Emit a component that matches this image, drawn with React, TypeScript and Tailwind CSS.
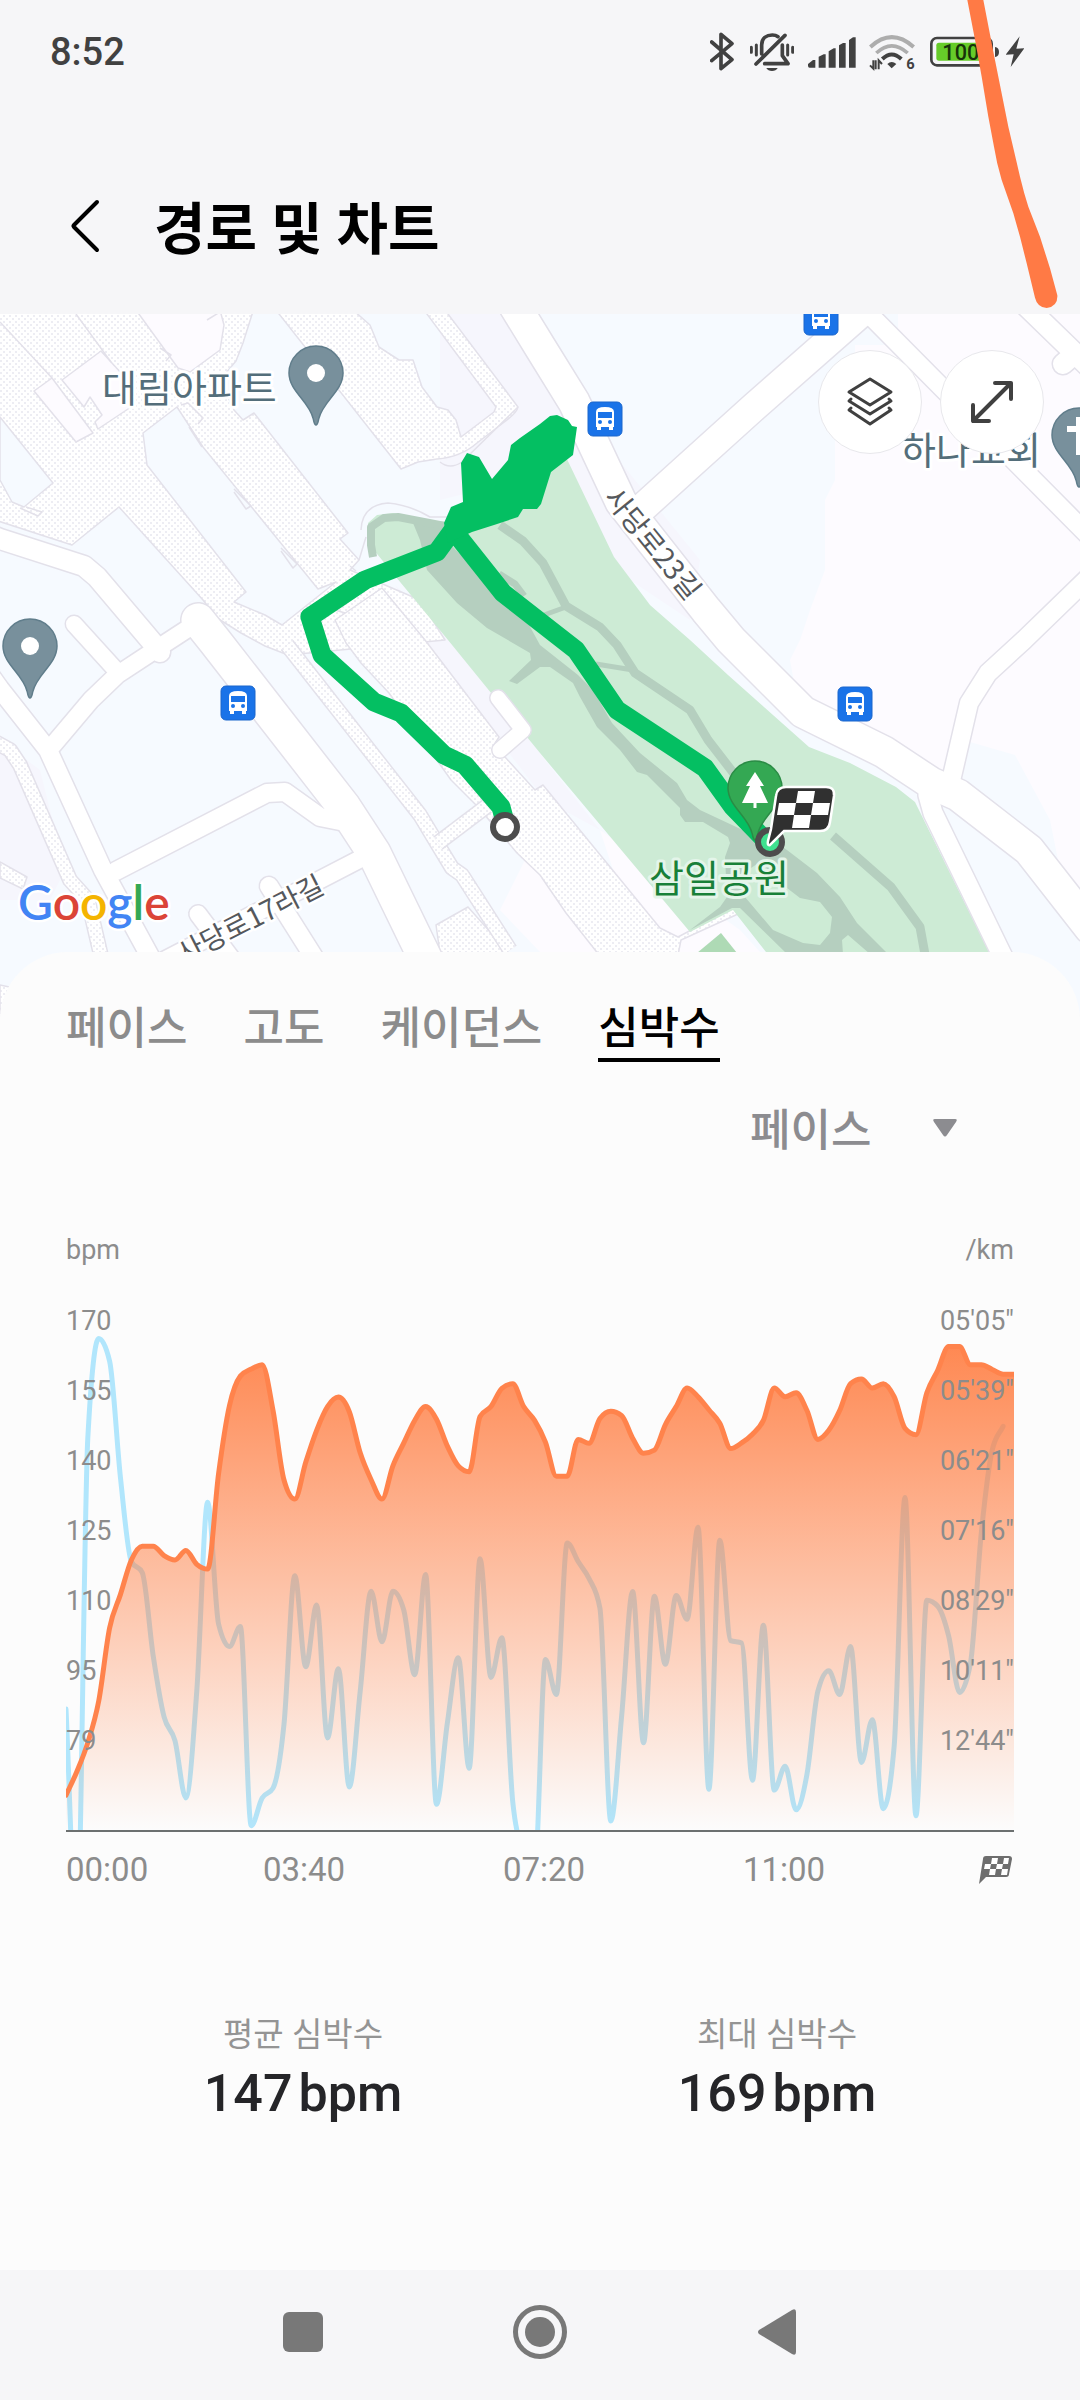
import React from "react";

const KR = "font-['Roboto','Noto_Sans_CJK_KR',sans-serif]";

/* ---------- chart data ---------- */

const HEART_RATE = [
  1303, 1243, 1170, 1065, 880, 795, 708, 673, 673, 697, 708, 684, 719, 731, 490, 318, 243, 225, 214, 330, 505, 554,
  461, 380, 320, 296, 333, 437, 505, 554, 470, 412, 355, 320, 352, 420, 470, 485, 345, 320, 274, 262, 320, 355, 410,
  496, 496, 403, 413, 350, 332, 343, 400, 438, 430, 366, 320, 273, 295, 328, 362, 426, 412, 390, 355, 273, 295, 285,
  330, 403, 380, 330, 262, 250, 273, 262, 295, 375, 391, 285, 228, 168, 168, 214, 214, 226, 238, 238,
];

const PACE = [
  1085, 1660, 400, 148, 205, 500, 712, 740, 950, 1105, 1165, 1310, 1040, 562, 870, 927, 876, 1380, 1310, 1285, 1125,
  748, 978, 822, 1158, 983, 1282, 1040, 787, 915, 787, 835, 998, 745, 1326, 1120, 955, 1235, 705, 1005, 905, 1320,
  1450, 1500, 960, 1048, 665, 712, 755, 830, 1368, 1100, 788, 1170, 800, 972, 798, 858, 625, 1288, 658, 912, 918,
  1265, 873, 1290, 1230, 1340, 1250, 1040, 988, 1048, 927, 1220, 1112, 1337, 1180, 550, 1355, 810, 825, 900, 1043,
  970, 640, 430, 370,
];

const STEP = 2844 / 87;
const FLOOR = 1396;

/* Monotone cubic: every sample that is a local peak or trough gets a flat tangent. */
function curve(values: number[]): string {
  const last = values.length - 1;
  const slope = (i: number) => {
    if (i === 0) return (values[1] - values[0]) / STEP;
    if (i === last) return (values[last] - values[last - 1]) / STEP;
    const a = (values[i] - values[i - 1]) / STEP;
    const b = (values[i + 1] - values[i]) / STEP;
    if (a * b <= 0) return 0;
    return Math.sign(a) * Math.min(Math.abs(a) * 2, Math.abs(b) * 2, Math.abs(a + b) / 2);
  };
  const h = STEP / 3;
  let d = `M0 ${values[0]}`;
  for (let i = 1; i <= last; i++) {
    const x0 = (i - 1) * STEP;
    const x1 = i * STEP;
    const p = [x0 + h, values[i - 1] + slope(i - 1) * h, x1 - h, values[i] - slope(i) * h, x1, values[i]];
    d += "C" + p.map((n) => n.toFixed(1)).join(" ");
  }
  return d;
}

const HEART_LABELS = ["170", "155", "140", "125", "110", "95", "79"];
const PACE_LABELS = ["05'05\"", "05'39\"", "06'21\"", "07'16\"", "08'29\"", "10'11\"", "12'44\""];

/* ---------- status bar ---------- */

function StatusBar() {
  return (
    <div className="flex h-[102px] items-center justify-between pr-[56px] pl-[50px] text-[#414141]">
      <span className="pt-[2px] text-[38px] leading-[44px] font-medium">8:52</span>
      <div className="flex items-center">
        <svg className="mr-4 h-[43px] w-6" viewBox="90 88 72 129" fill="none" stroke="#414141" strokeWidth="11" strokeLinecap="round" strokeLinejoin="round">
          <path d="M95 124L156 177L123 204V101L156 129L95 180" />
        </svg>
        <svg className="mr-[14px] h-[43px] w-11" viewBox="210 88 132 129" fill="none" stroke="#414141" strokeLinecap="round">
          <path strokeWidth="9" d="M214 140V155M229 133V163M323 133V163M338 140V155" />
          <path strokeWidth="11" strokeLinejoin="round" d="M228 190L315 104M245 160V133C245 112 260 103 277 103C285 103 290 105 294 108M307 133V165L324 189H254" />
          <path fill="#414141" stroke="none" d="M259 202H293C288 214 264 214 259 202Z" />
        </svg>
        <svg className="mr-[13px] h-[43px] w-12" viewBox="385 88 144 129" fill="#414141">
          <path d="M385 190L400 178H407V201H390Q385 201 385 195ZM417 168L432 161H438V201H417ZM447 152L462 143H468V201H447ZM478 134L490 127H498V201H478ZM508 118L520 110H528V201H508Z" />
        </svg>
        <svg className="mr-[15px] h-[43px] w-[46px]" viewBox="567 88 138 129" fill="none">
          <path d="M571 139Q635 80 701 139" stroke="#adadad" strokeWidth="12" />
          <path d="M589 157Q635 114 683 157" stroke="#adadad" strokeWidth="11" />
          <path d="M607 175Q635 148 664 175" stroke="#414141" strokeWidth="12" />
          <path d="M622 190Q635 178 649 190L635 203Z" fill="#414141" />
          <path d="M580 179V204L570 194M587 179V206M596 206V179L606 190" stroke="#414141" strokeWidth="6" />
          <text x="679" y="206" fontSize="44" fontWeight="700" fill="#414141" className="font-['Roboto']">6</text>
        </svg>
        <svg className="mr-[7px] h-[43px] w-[69px]" viewBox="750 88 207 129">
          <rect x="754" y="112" width="181" height="82" rx="17" fill="#f6f6f8" stroke="#414141" strokeWidth="8" />
          <rect x="769" y="126" width="152" height="54" rx="8" fill="#66cc29" />
          <path d="M945 139Q957 141 957 154Q957 167 945 169Z" fill="#414141" />
          <text x="787" y="179" fontSize="65" fontWeight="500" fill="#17330a" className="font-['Roboto']">100</text>
        </svg>
        <svg className="h-[43px] w-[18px]" viewBox="978 88 54 129" fill="#414141">
          <path d="M1019 107L977 162L1001 161L992 199L1033 143L1009 144Z" />
        </svg>
      </div>
    </div>
  );
}

/* ---------- map ---------- */

const ROADS: { d: string; w: number }[] = [
  { d: "M-10 535L0 539L84 566L97 577L152 642L160 652", w: 20 },
  { d: "M198 622L155 650L117 675L91 700L53 745", w: 17 },
  { d: "M74 624L114 668", w: 16 },
  { d: "M198 620L214 640L344 807L374 853L427 962", w: 33 },
  { d: "M-10 675L0 689L48 750L103 870L152 960", w: 18 },
  { d: "M116 871L267 793L285 792L320 817L355 824", w: 18 },
  { d: "M362 858L165 960", w: 17 },
  { d: "M269 886L322 970", w: 18 },
  { d: "M198 914L240 970", w: 17 },
  { d: "M505 290L540 347L574 402L621 502L706 610L731 640L803 712L884 752L931 783L958 795L1029 850L1090 928", w: 31 },
  { d: "M640 510L754 407L870 305", w: 28 },
  { d: "M860 305L1090 537", w: 18 },
  { d: "M1020 300L1090 368", w: 20 },
  { d: "M1063 364L1070 358", w: 20 },
  { d: "M1090 576L1024 640L988 673L969 703L950 785", w: 18 },
  { d: "M928 795L933 813L1001 953L1040 1030", w: 19 },
  { d: "M498 698L523 730L500 750", w: 15 },
];

function Bus({ x, y }: { x: number; y: number }) {
  return (
    <g transform={`translate(${x} ${y})`}>
      <rect x="-17" y="-17" width="34" height="34" rx="5" fill="#1a73e8" stroke="#1b66cc" strokeWidth="1" />
      <path d="M-9 8V-7Q-9 -12 0 -12Q9 -12 9 -7V8H8V11H4V8H-4V11H-8V8Z" fill="#fff" />
      <rect x="-7" y="-7" width="14" height="6" fill="#1a73e8" />
      <circle cx="-5" cy="3" r="2" fill="#1a73e8" />
      <circle cx="5" cy="3" r="2" fill="#1a73e8" />
    </g>
  );
}

function Pin({ x, y, fill, edge, children }: { x: number; y: number; fill: string; edge: string; children: React.ReactNode }) {
  return (
    <g transform={`translate(${x} ${y})`}>
      <path d="M0 52C-2 52 -2 48 -3 45C-7 28 -27 18 -27 0A27 27 0 0 1 27 0C27 18 7 28 3 45C2 48 2 52 0 52Z" fill={fill} stroke={edge} strokeWidth="1.5" />
      {children}
    </g>
  );
}

function RouteMap() {
  const line = "#e3e1ea";
  return (
    <svg
      role="img"
      aria-label="경로 지도"
      className="block h-[700px] w-full font-['Noto_Sans_CJK_KR',sans-serif]"
      viewBox="0 314 1080 700"
      preserveAspectRatio="xMidYMid slice"
    >
      <defs>
        <pattern id="dots" width="6" height="6" patternUnits="userSpaceOnUse">
          <rect width="6" height="6" fill="#fff" />
          <rect x="0" y="0" width="2" height="2" fill="#ededf3" />
          <rect x="3" y="3" width="2" height="2" fill="#ededf3" />
        </pattern>
      </defs>
      <rect x="0" y="314" width="1080" height="700" fill="#f6faff" />
      <path fill="#f6f6fd" d="M440 314H500L700 560L690 620L600 560L520 480L440 500ZM0 740L40 770L65 870L50 900H0ZM395 585L450 640L500 700L545 760L600 830L545 800L430 650Z" />
      <path fill="#fdfbff" d="M898 314H1080V900L1060 870L1050 820L1015 755L970 742L960 790L900 770L800 715L790 660L800 640L810 610L825 570V500L835 480V430H855V345H898ZM540 830L640 952H540L500 910ZM600 830L740 930L760 952H640Z" />

      {/* apartment blocks */}
      <g stroke={line} strokeWidth="1.5" strokeLinejoin="round">
        <path fill="url(#dots)" d="M-5 305H255L243 343L236 361L220 380L234 410L243 420L254 413L348 533L340 539L359 560L350 570L420 600L445 640L288 655L265 646L241 633L217 618L203 600L119 507L72 545L-5 520Z" />
        <path fill="url(#dots)" d="M272 305L401 469L418 462L437 459Q461 457 477 443L503 423Q517 413 518 407L445 310L424 310L496 407L494 412L461 437L456 420L448 410L437 407L422 387L413 360L399 360L379 347L370 325L353 310Z" />
        <path fill="#f6faff" d="M143 433L177 407L203 447L318 589L336 582L282 625L265 615L234 602L246 592L147 465Z" />
        <path fill="#f6faff" d="M0 417L53 483L24 507L12 502L0 480Z" />
        <path fill="#fdfbff" d="M136 310L178 368L190 372L220 350L224 325L220 310ZM34 391L52 378L93 433L76 442ZM62 380L101 351L111 362L134 387L131 407L98 429L95 422L102 415L90 397L84 407Z" />
        <path fill="none" d="M0 322L52 378M76 314L111 362M26 507L42 512L38 516L20 508M181 405L188 403L203 418L198 424M189 427L202 447M160 348L171 355L166 361M234 489L251 506L246 509L234 492M281 548L297 564L293 568L281 551M359 560L366 537M440 462Q450 470 462 462L518 407M220 312L207 320M350 566L356 571M335 610L345 613M361 530Q362 505 388 503Q410 505 430 517H448" />
      </g>
      <g stroke={line} strokeWidth="1.5" strokeLinejoin="round" fill="url(#dots)">
        <path d="M335 620L382 588L425 640L499 737L494 745L505 757L535 790L543 785L660 928L678 937L733 908L738 914L681 940L677 960H603L566 913L540 875L517 853L478 807L451 780L389 693L361 663L346 643Z" />
        <path d="M436 925L468 907L515 960H441ZM0 985L14 988L20 1014H0ZM0 862L27 877L23 889L0 878Z" />
      </g>
      {[
        { d: "M287 645L420 815L435 840L452 868L462 875L510 950", w: 13 },
        { d: "M438 843L487 806", w: 13 },
        { d: "M-5 742L10 750L20 765L70 880L88 900L102 960", w: 13 },
      ].map((s) => (
        <g key={s.d} fill="none" strokeLinejoin="round">
          <path d={s.d} stroke={line} strokeWidth={s.w + 3} />
          <path d={s.d} stroke="url(#dots)" strokeWidth={s.w} />
        </g>
      ))}

      {/* park */}
      <path fill="#cdebd5" d="M368 543V523L377 515L393 513L420 520L448 522L565 455L614 557L650 605L690 640L728 675L809 747L850 763L896 787L915 802L989 952H766L733 910L690 932L540 753L448 640L396 577Z" />
      <path fill="#b5cfbf" d="M413 523L420 540L427 570L457 603L487 628L530 653L531 660L509 681L517 684L540 667H550L573 683L580 697L597 727L620 750L637 772L647 775L680 808V815L685 822L703 822L728 837L730 843L725 857L727 897L720 907L690 930L732 908H740L787 954H888L857 923L840 897L817 873L787 850L765 835L747 832L700 810L687 800L677 783L640 753L612 723L593 690L578 675L540 645L528 623L453 547L448 523Z" />
      <g fill="none" stroke="#b5cfbf" strokeLinejoin="round">
        <path strokeWidth="9" d="M500 525L523 541L543 563L566 606L600 627L617 645L635 673L690 710L708 740L735 775M833 836L891 887L920 927L926 960" />
        <path strokeWidth="5" d="M544 615L566 607M596 664L633 670" />
        <path strokeWidth="7" d="M499 574L515 584L524 596" />
        <path strokeWidth="8" d="M373 557L371 545V527L384 518L398 517L450 527" />
      </g>
      <path fill="#cdebd5" d="M748 870L760 862L787 888L800 898L820 902L832 917L830 933L820 945L803 943L773 930L745 897ZM843 954L842 940L848 935L870 954Z" />
      <path fill="#aedab5" d="M697 953L721 933L737 953Z" />

      {/* roads: outline first, then surface, so junctions stay open */}
      <g fill="none" stroke={line} strokeLinecap="round" strokeLinejoin="round">
        {ROADS.map((r) => (
          <path key={r.d} d={r.d} strokeWidth={r.w + 3} />
        ))}
      </g>
      <g fill="none" stroke="#fff" strokeLinecap="round" strokeLinejoin="round">
        {ROADS.map((r) => (
          <path key={r.d} d={r.d} strokeWidth={r.w} />
        ))}
      </g>

      <Bus x={821} y={318} />
      <Bus x={605} y={419} />
      <Bus x={238} y={703} />
      <Bus x={855} y={704} />

      {/* route */}
      <path fill="none" stroke="#04bf62" strokeWidth="19" strokeLinejoin="round" d="M505 822L501 807L465 765L444 755L401 713L374 702L322 655L310 617L365 580L437 552L453 530L503 593L576 650L617 710L705 768L733 807L767 842" />
      <path fill="#04bf62" d="M461 463L467 453L479 457L492 479L508 460L511 445L520 438L540 424L550 416L557 415L568 420L572 426L577 427L573 455L551 472L541 504L537 509L523 509L518 517L494 525L472 532L448 543L444 523L451 507L463 502Z" />

      <Pin x={316} y={373} fill="#78909c" edge="#607d8b"><circle r="9" fill="#fff" /></Pin>
      <Pin x={30} y={646} fill="#78909c" edge="#607d8b"><circle r="9" fill="#fff" /></Pin>
      <Pin x={1079} y={435} fill="#78909c" edge="#607d8b"><path d="M-3 -18H3V-9H12V-3H3V20H-3V-3H-12V-9H-3Z" fill="#fff" /></Pin>
      <circle cx="505" cy="827" r="12" fill="#fff" stroke="#4d4d4d" strokeWidth="6" />
      <Pin x={755} y={788} fill="#34a853" edge="#2a8c45">
        <path d="M0 -16L9 -2H5L13 15H1.500V20H-1.500V15H-13L-5 -2H-9Z" fill="#fff" />
      </Pin>
      <circle cx="770" cy="842" r="12" fill="#3fe08f" stroke="#4d4d4d" strokeWidth="6" />
      <path d="M776 796Q777 787 786 787H826Q835 787 834 796L830 822Q829 831 820 831H784L770 845Q767 846 768 841L771 829Z" fill="#303030" stroke="#fff" strokeWidth="2.500" />
      <path d="M798 791H815L813 803H796ZM779 803H796L794 815H777ZM813 803H830L828 815H811ZM794 815H811L809 828H792Z" fill="#fff" />

      {/* place names */}
      <g stroke="#fff" strokeWidth="6" strokeLinejoin="round" paintOrder="stroke" fontSize="38">
        <text x="102" y="402" fill="#546e7a">대림아파트</text>
        <text x="901" y="464" fill="#546e7a">하나교회</text>
        <text x="649" y="892" fill="#188038" stroke="#e4f5ea">삼일공원</text>
      </g>
      <g stroke="#fff" strokeWidth="5" strokeLinejoin="round" paintOrder="stroke" fontSize="28" fill="#55585c">
        <text textAnchor="middle" transform="translate(645 550) rotate(51)">사당로23길</text>
        <text textAnchor="end" transform="translate(326 892) rotate(-27)">사당로17라길</text>
      </g>
      <text x="18" y="920" fontSize="48" fontWeight="600" stroke="#fff" strokeWidth="5" paintOrder="stroke" strokeLinejoin="round" className="font-['Lato',sans-serif]">
        <tspan fill="#4285f4">G</tspan>
        <tspan fill="#db4437">o</tspan>
        <tspan fill="#f4b400">o</tspan>
        <tspan fill="#4285f4">g</tspan>
        <tspan fill="#34a853">l</tspan>
        <tspan fill="#db4437">e</tspan>
      </text>
    </svg>
  );
}

const ROUND_BUTTON =
  "flex size-[104px] items-center justify-center rounded-full border border-[#e8e8ec] bg-white text-[#404040]";

function MapPanel() {
  return (
    <section className="relative">
      <RouteMap />
      <div className="absolute top-9 right-9 flex gap-[18px]">
        <button type="button" aria-label="지도 유형" className={ROUND_BUTTON}>
          <svg className="size-[50px]" viewBox="0 0 50 50" fill="none" stroke="currentColor" strokeWidth="3" strokeLinejoin="round" strokeLinecap="round">
            <path d="M25 2L46 15L25 28L4 15Z" />
            <path d="M6 22L4 24L25 37L46 24L44 22" />
            <path d="M6 31L4 33L25 47L46 33L44 31" />
          </svg>
        </button>
        <button type="button" aria-label="전체 화면" className={ROUND_BUTTON}>
          <svg className="size-[50px]" viewBox="0 0 50 50" fill="none" stroke="currentColor" strokeWidth="4" strokeLinejoin="round" strokeLinecap="round">
            <path d="M6 44L44 6M28 6H44V22M6 28V44H22" />
          </svg>
        </button>
      </div>
    </section>
  );
}

/* ---------- chart ---------- */

function AxisLabels({ labels, className }: { labels: string[]; className: string }) {
  return (
    <ul className={"absolute top-0 text-[27px] leading-[70px] text-[#8c8c8c] " + className}>
      {labels.map((l) => (
        <li key={l}>{l}</li>
      ))}
    </ul>
  );
}

function Chart() {
  const heart = curve(HEART_RATE);
  return (
    <figure>
      <div className="mt-[66px] flex justify-between text-[27px] leading-9 text-[#8c8c8c]">
        <span>bpm</span>
        <span>/km</span>
      </div>
      <div className="relative mt-[18px] border-b-2 border-[#6c7070]">
        <svg className="block h-[544px] w-full" viewBox="0 15 2844 1376" preserveAspectRatio="none" fill="none" strokeLinecap="round" strokeLinejoin="round">
          <defs>
            <linearGradient id="heat" x1="0" y1="168" x2="0" y2="1391" gradientUnits="userSpaceOnUse">
              <stop offset="0" stopColor="#ff7c40" stopOpacity="0.9" />
              <stop offset="1" stopColor="#ff7c40" stopOpacity="0" />
            </linearGradient>
          </defs>
          <path d={curve(PACE)} stroke="#b1e6fc" strokeWidth="5" vectorEffect="non-scaling-stroke" />
          <path d={`${heart}V${FLOOR}H0Z`} fill="url(#heat)" />
          <path d={heart} stroke="#ff834c" strokeWidth="5" vectorEffect="non-scaling-stroke" />
        </svg>
        <AxisLabels labels={HEART_LABELS} className="left-0" />
        <AxisLabels labels={PACE_LABELS} className="right-0 text-right" />
      </div>
      <div className="mt-[18px] flex items-center text-[33px] leading-10 text-[#8c8c8c]">
        <span className="flex-[118]">00:00</span>
        <span className="flex-[240] text-center">03:40</span>
        <span className="flex-[240] text-center">07:20</span>
        <span className="flex-[240] text-center">11:00</span>
        <span className="flex flex-[110] justify-end">
          <svg role="img" aria-label="종료" className="h-7 w-9" viewBox="0 0 36 28">
            <path d="M5 3Q5 0 8 0H31Q34 0 34 3L31 18Q31 21 28 21H8L1 28Z" fill="#6e6e6e" />
            <path d="M14 2H20L19 8H13ZM26 2H31L30 8H25ZM7 8H13L12 13H6ZM19 8H25L24 13H18ZM12 13H18L17 19H11ZM24 13H30L29 19H23Z" fill="#fff" />
          </svg>
        </span>
      </div>
    </figure>
  );
}

function Stat({ label, value }: { label: string; value: string }) {
  return (
    <div className="flex flex-1 flex-col items-center">
      <dt className="text-[33px] leading-[46px] text-[#949494]">{label}</dt>
      <dd className="mt-1 flex gap-[6px] text-[52px] leading-[64px] font-medium text-[#252528]">
        <span>{value}</span>
        <span>bpm</span>
      </dd>
    </div>
  );
}

const TABS = ["페이스", "고도", "케이던스", "심박수"];

export default function App() {
  return (
    <div className={"relative flex min-h-screen flex-col overflow-hidden bg-[#f6f6f8] " + KR}>
      <StatusBar />
      <header className="flex h-[212px] items-start gap-10 pt-[84px] pl-[60px]">
        <button type="button" aria-label="뒤로" className="flex h-[80px] w-[54px] items-center pl-2">
          <svg className="h-[54px] w-[34px]" viewBox="0 0 34 54" fill="none" stroke="#000" strokeWidth="4" strokeLinecap="round" strokeLinejoin="round">
            <path d="M29 3L6 26Q5 27 6 28L29 51" />
          </svg>
        </button>
        <h1 className="pt-1 text-[56px] leading-[80px] font-bold text-black">경로 및 차트</h1>
      </header>

      <MapPanel />

      <main className="relative -mt-[62px] flex-1 rounded-t-[68px] bg-[#fcfcfc] px-[66px] pt-11 pb-[144px]">
        <div role="tablist" className="flex gap-14 text-[44px] leading-[62px] font-medium">
          {TABS.map((t) => (
            <button
              key={t}
              type="button"
              role="tab"
              aria-selected={t === "심박수"}
              className="border-b-4 border-transparent pt-1 leading-[58px] text-[#8c8c8c] aria-selected:border-black aria-selected:text-black"
            >
              {t}
            </button>
          ))}
        </div>

        <div className="relative mt-[34px] ml-auto w-[264px]">
          <select aria-label="비교 지표" defaultValue="페이스" className="h-[70px] w-full appearance-none bg-transparent text-[44px] leading-[70px] font-medium text-[#8c8c90]">
            <option>페이스</option>
            <option>고도</option>
            <option>케이던스</option>
          </select>
          <svg className="pointer-events-none absolute top-[23px] right-[57px] h-[18px] w-6" viewBox="0 0 24 18" fill="#8c8c90">
            <path d="M2 0H22Q25 0 23 3L14 16Q12 19 10 16L1 3Q-1 0 2 0Z" />
          </svg>
        </div>

        <Chart />

        <dl className="mt-[122px] flex">
          <Stat label="평균 심박수" value="147" />
          <Stat label="최대 심박수" value="169" />
        </dl>
      </main>

      <nav className="flex h-[130px] items-center justify-around px-[93px] pb-[6px]">
        <button type="button" aria-label="최근 앱" className="flex flex-1 justify-center">
          <span className="size-10 rounded-[6px] bg-[#787878]" />
        </button>
        <button type="button" aria-label="홈" className="flex w-[54px] justify-center">
          <span className="flex size-[54px] items-center justify-center rounded-full border-[5px] border-[#787878]">
            <span className="size-[30px] rounded-full bg-[#787878]" />
          </span>
        </button>
        <button type="button" aria-label="뒤로 가기" className="flex flex-1 justify-center">
          <svg className="h-[46px] w-[38px]" viewBox="0 0 38 46" fill="#787878">
            <path d="M1 21L34 1Q38 -1 38 3V43Q38 47 34 45L1 25Q-1 23 1 21Z" />
          </svg>
        </button>
      </nav>

      {/* finger stroke over the corner of the screen */}
      <svg className="pointer-events-none absolute top-0 right-0 h-[310px] w-[120px]" viewBox="840 0 360 930" fill="#ff7a45">
        <path d="M862 0L887 130L905 230L925 350L942 440Q950 490 965 540L1000 640L1020 710L1040 790L1065 893Q1072 922 1100 924Q1134 920 1132 886L1110 805L1080 710L1045 620Q1032 580 1020 530L985 380L940 155L910 0Z" />
      </svg>
    </div>
  );
}
